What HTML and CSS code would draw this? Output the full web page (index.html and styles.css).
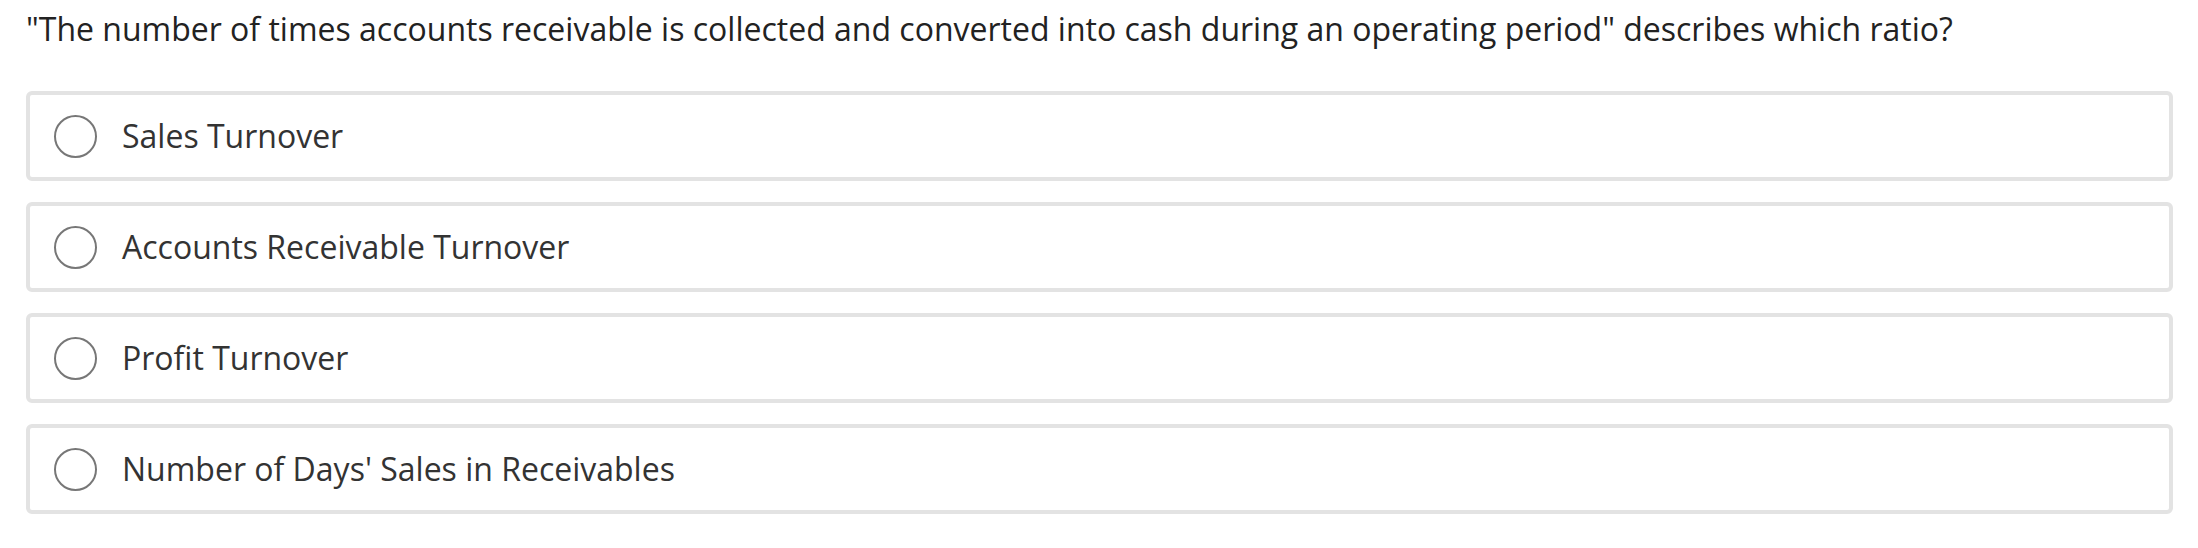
FILE: index.html
```html
<!DOCTYPE html>
<html lang="en">
<head>
<meta charset="utf-8">
<title>Question</title>
<link rel="stylesheet" href="styles.css">
</head>
<body>
<div class="quiz">
  <p class="question">"The number of times accounts receivable is collected and converted into cash during an operating period" describes which ratio?</p>
  <div class="options">
    <label class="option"><span class="radio"></span><span class="label">Sales Turnover</span></label>
    <label class="option"><span class="radio"></span><span class="label">Accounts Receivable Turnover</span></label>
    <label class="option"><span class="radio"></span><span class="label">Profit Turnover</span></label>
    <label class="option"><span class="radio"></span><span class="label">Number of Days' Sales in Receivables</span></label>
  </div>
</div>
</body>
</html>
```
FILE: styles.css
```css
html, body {
  margin: 0;
  padding: 0;
  background: #ffffff;
}
body {
  font-family: "Open Sans", "Liberation Sans", sans-serif;
  color: #2b2b2b;
}
.quiz {
  padding: 8px 25px 0 26px;
}
.question {
  margin: 0;
  font-size: 32px;
  line-height: 42px;
  color: #222;
}
.options {
  margin-top: 41px;
  display: flex;
  flex-direction: column;
  gap: 21px;
}
.option {
  display: flex;
  align-items: center;
  box-sizing: border-box;
  height: 90px;
  border: 4px solid #e3e3e3;
  border-radius: 6px;
  padding-left: 24px;
  gap: 25px;
}
.radio {
  box-sizing: border-box;
  width: 43px;
  height: 43px;
  border: 2px solid #777;
  border-radius: 50%;
  flex: none;
}
.label {
  font-size: 32px;
  line-height: 42px;
  color: #333;
}
```
